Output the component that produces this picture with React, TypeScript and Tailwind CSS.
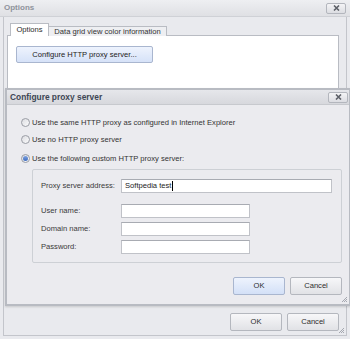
import React from "react";

const font = { fontFamily: '"Liberation Sans", Arial, sans-serif' };

function CloseBtn() {
  return (
    <div className="w-[20px] h-[11px] rounded-[2px] border border-[#b3b6bd] bg-gradient-to-b from-[#f4f4f6] to-[#dcdde2] flex items-center justify-center">
      <svg width="7" height="6" viewBox="0 0 7 6">
        <path d="M1 0.5 L6 5.5 M6 0.5 L1 5.5" stroke="#5d6068" strokeWidth="1.6" />
      </svg>
    </div>
  );
}

function Grip() {
  return (
    <svg width="7" height="7" viewBox="0 0 7 7" className="absolute right-[1px] bottom-[1px]">
      <path d="M6 1 L1 6 M6 3 L3 6 M6 5 L5 6" stroke="#a5a8b0" strokeWidth="1" />
    </svg>
  );
}

function Btn({ label, active }: { label: string; active?: boolean }) {
  return (
    <div
      className={
        "h-[18px] flex items-center justify-center rounded-[2px] border text-[7.6px] text-[#2c2c2c] " +
        (active
          ? "w-[52px] border-[#a9b6cf] bg-gradient-to-b from-[#eef3fd] to-[#d3e0f7]"
          : "w-[52px] border-[#b4b7be] bg-gradient-to-b from-[#f7f7f9] to-[#e1e2e6]")
      }
    >
      {label}
    </div>
  );
}

function Radio({ checked, label }: { checked?: boolean; label: string }) {
  return (
    <div className="h-[13px] flex items-center gap-[2px]">
      <div className="w-[9px] h-[9px] rounded-full border border-[#9a9da5] bg-gradient-to-br from-[#dcdde1] to-[#fbfbfc] flex items-center justify-center">
        {checked && <div className="w-[5px] h-[5px] rounded-full bg-gradient-to-b from-[#7fa3e0] to-[#3e6cc0]" />}
      </div>
      <span className="text-[7.6px] text-[#333]">{label}</span>
    </div>
  );
}

function Field({ label, value, wide }: { label: string; value?: string; wide?: boolean }) {
  return (
    <div className="flex items-center h-[14px]">
      <span className="w-[80px] text-[7.6px] text-[#3a3a3a]">{label}</span>
      <div
        className={
          "h-[14px] bg-white border border-[#c0c2c8] border-t-[#a8abb2] flex items-center pl-[3px] text-[7.6px] text-[#222] " +
          (wide ? "flex-1" : "w-[129px]")
        }
      >
        {value}
        {value && <span className="w-[1px] h-[10px] bg-black ml-[0.5px]" />}
      </div>
    </div>
  );
}

export default function App() {
  return (
    <div className="relative w-[350px] h-[339px] overflow-hidden bg-[#e9eaee]" style={font}>
      {/* Outer window */}
      <div className="flex flex-col w-[350px] h-[336px]">
        <div className="h-[17px] shrink-0 flex items-center justify-between pl-[4px] pr-[4px] bg-gradient-to-b from-[#eeeff2] to-[#dfe0e4] border-b border-[#cfd1d6]">
          <span className="text-[8px] font-bold text-[#8f939b]">Options</span>
          <CloseBtn />
        </div>
        <div className="relative flex-1 flex flex-col mx-[3px] border-x border-b border-[#c3c5cb] pt-[6px] pl-[3px] pr-[7px]">
          <div className="flex items-end h-[13px] pl-[3px] relative z-10">
            <div className="w-[39px] h-[13px] bg-white border border-b-0 border-[#b9bcc3] flex items-center justify-center text-[7.6px] text-[#2c2c2c]">
              Options
            </div>
            <div className="w-[118px] h-[10px] bg-[#eeeff2] border border-l-0 border-b-0 border-[#b9bcc3] flex items-center justify-center text-[7.6px] text-[#333]">
              Data grid view color information
            </div>
          </div>
          <div className="h-[270px] -mt-[1px] bg-white border border-[#b9bcc3] pt-[10px] pl-[8px]">
            <div className="w-[137px] h-[17px] rounded-[2px] border border-[#a9b6cf] bg-gradient-to-b from-[#eef3fd] to-[#d6e2f8] flex items-center justify-center text-[7.6px] text-[#222]">
              Configure HTTP proxy server...
            </div>
          </div>
          <div className="flex justify-end gap-[5px] mt-[8px] pr-[-2px]">
            <Btn label="OK" />
            <Btn label="Cancel" />
          </div>
          <Grip />
        </div>
      </div>

      {/* Dialog */}
      <div className="absolute left-[5px] top-[88px] w-[346px] h-[218px] flex flex-col border-2 border-[#b8bbc2] bg-[#ebebef] shadow-[0_1px_2px_rgba(0,0,0,0.15)]">
        <div className="h-[15px] shrink-0 flex items-center justify-between pl-[3px] pr-[1px] bg-gradient-to-b from-[#e6e7eb] to-[#d7d8dd] border-b border-[#c7c9ce]">
          <span className="text-[8.4px] font-bold text-[#3d4654]">Configure proxy server</span>
          <CloseBtn />
        </div>
        <div className="relative flex-1 flex flex-col pt-[11px] pl-[14px] pr-[7px]">
          <Radio label="Use the same HTTP proxy as configured in Internet Explorer" />
          <div className="h-[4px]" />
          <Radio label="Use no HTTP proxy server" />
          <div className="h-[6px]" />
          <Radio checked label="Use the following custom HTTP proxy server:" />
          <div className="ml-[11px] mt-[4px] h-[94px] border border-[#cdd0d5] rounded-[2px] pt-[9px] pl-[8px] pr-[9px] flex flex-col">
            <Field label="Proxy server address:" value="Softpedia test" wide />
            <div className="h-[11px]" />
            <Field label="User name:" />
            <div className="h-[4px]" />
            <Field label="Domain name:" />
            <div className="h-[4px]" />
            <Field label="Password:" />
          </div>
          <div className="flex justify-end gap-[5px] mt-[14px] pr-[0px]">
            <Btn label="OK" active />
            <Btn label="Cancel" />
          </div>
          <Grip />
        </div>
      </div>
    </div>
  );
}
